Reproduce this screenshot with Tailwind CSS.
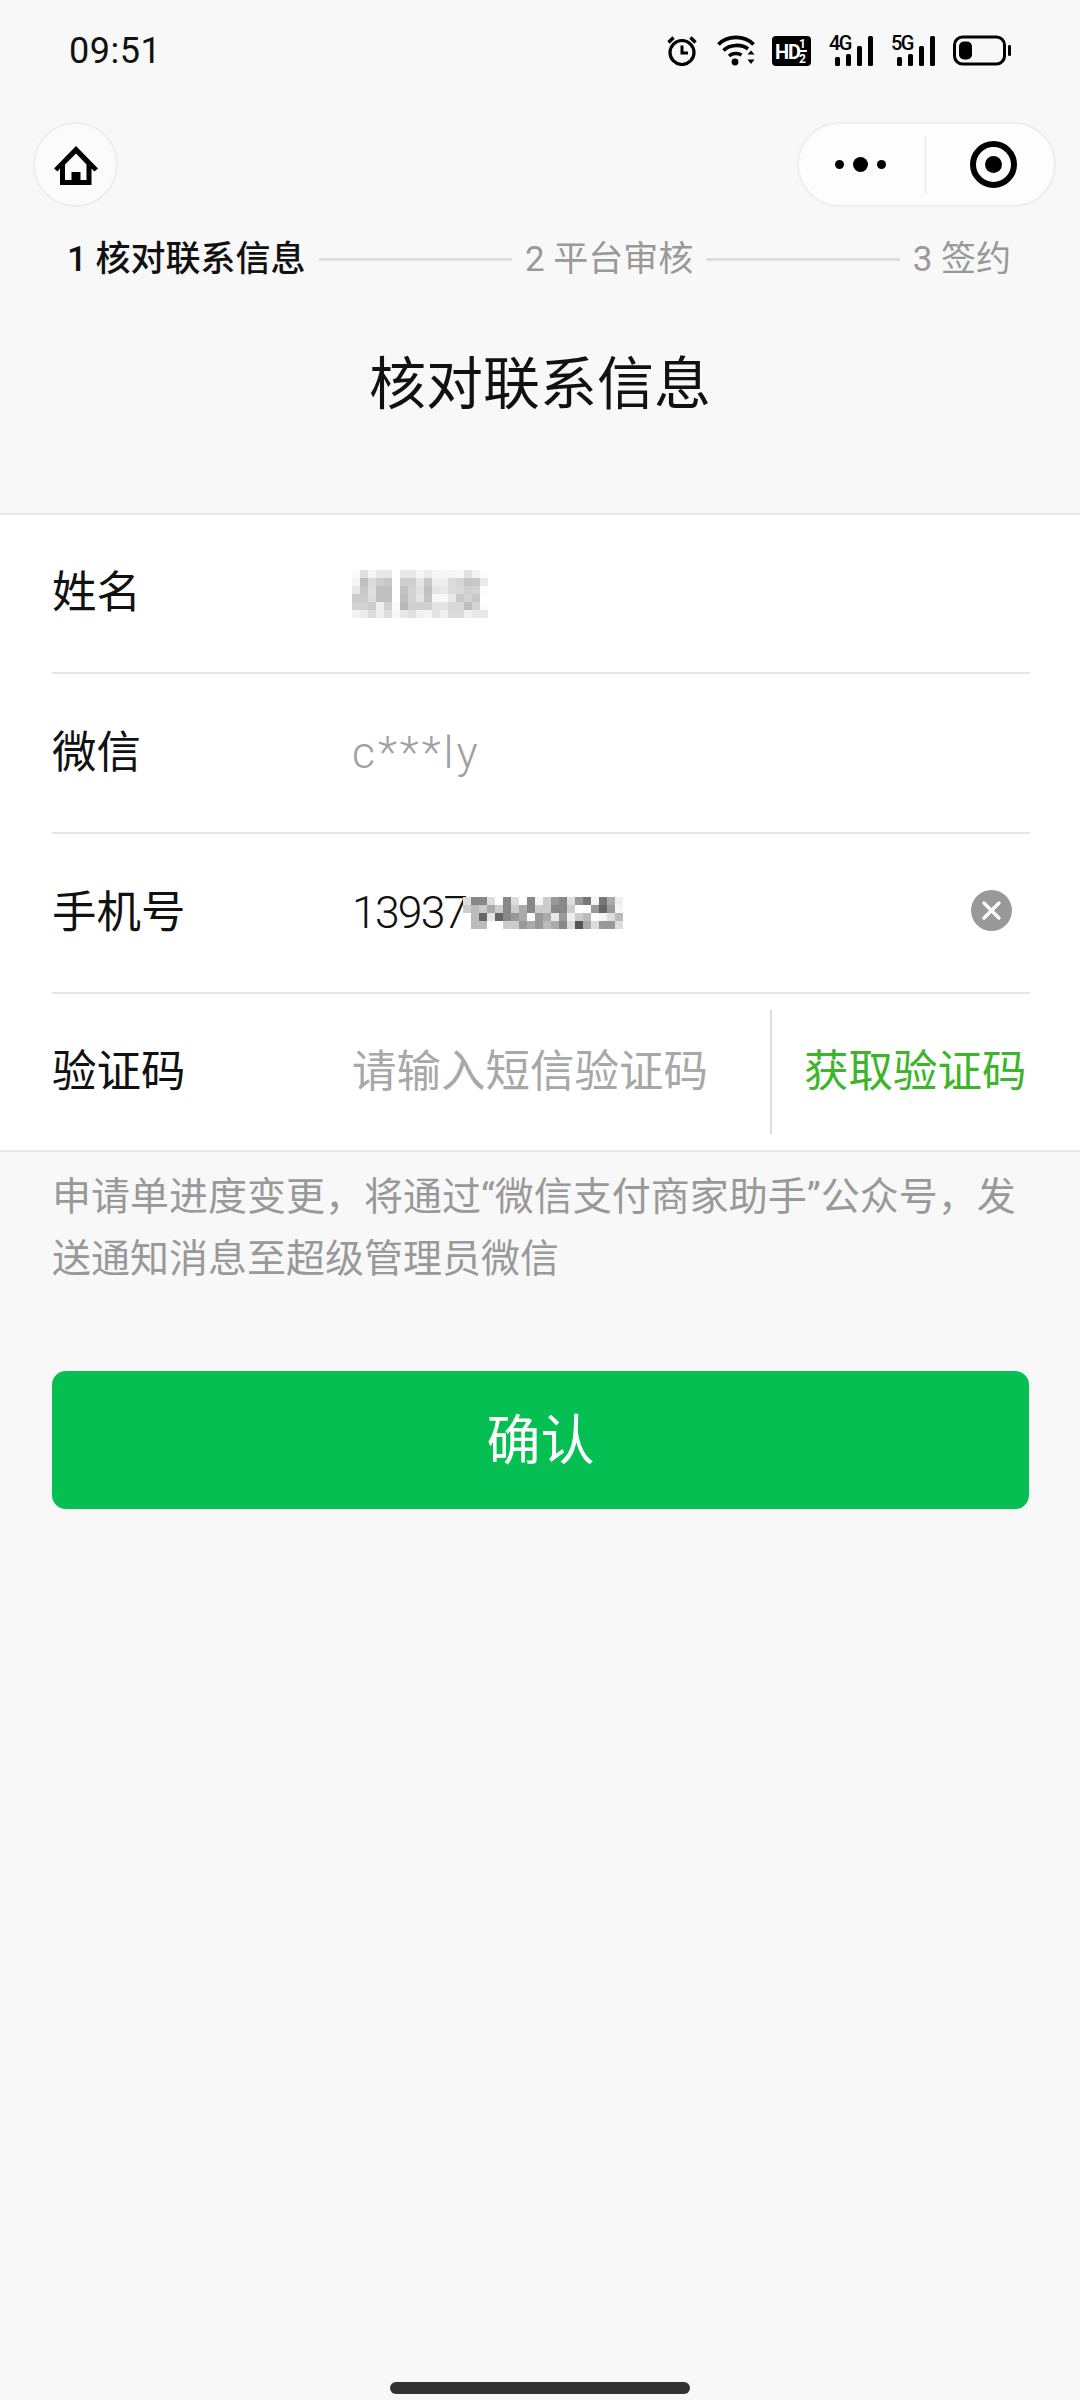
<!DOCTYPE html>
<html lang="zh-CN">
<head>
<meta charset="utf-8">
<script src="https://cdn.jsdelivr.net/npm/@tailwindcss/browser@4"></script>
</head>
<body>
<div class="relative w-[1080px] h-[2400px] bg-[#f8f8f8] overflow-hidden flex flex-col font-['Roboto','Noto_Sans_CJK_SC',sans-serif] text-[#111]">

  <!-- status bar -->
  <div class="h-[100px] flex items-center pl-[69px] pr-[69px] pt-[1px] shrink-0">
    <span class="text-[36px] leading-none tracking-[0.5px] font-normal">09:51</span>
    <div class="ml-auto flex items-center">
      <svg class="w-[30px] h-[31px]" viewBox="0 0 30 31" fill="none" stroke="#000">
        <circle cx="15" cy="17.5" r="12" stroke-width="3.2"/>
        <path d="M15 10.5V18H21" stroke-width="3"/>
        <path d="M1.5 7.5L6.5 2.5M28.5 7.5L23.5 2.5" stroke-width="3.4"/>
      </svg>
      <svg class="ml-[20px] w-[39px] h-[31px]" viewBox="0 0 39 31" fill="none" stroke="#000">
        <path d="M1.5 9.5C10 0 28 0 36.5 9.5" stroke-width="3.6"/>
        <path d="M6.5 15.5C12.5 9 25 9 31 14" stroke-width="3.6"/>
        <path d="M12 21C15.5 17.8 21 17.8 24.5 20" stroke-width="3.6"/>
        <circle cx="18" cy="27" r="3.4" fill="#000" stroke="none"/>
        <path d="M30.5 19.5L34 15.5L37.5 19.5ZM30.5 24.5H37.5L34 29Z" fill="#000" stroke="none"/>
      </svg>
      <div class="relative ml-[16px] w-[39px] h-[30px] rounded-[4px] bg-black text-white font-bold leading-none">
        <span class="absolute left-[3px] top-[6px] text-[20px] tracking-[-1.2px]">HD</span>
        <span class="absolute left-[27px] top-[2px] text-[12px]">1</span>
        <span class="absolute left-[26px] top-[14px] w-[9px] h-[2px] bg-white"></span>
        <span class="absolute left-[27px] top-[17px] text-[12px]">2</span>
      </div>
      <div class="relative ml-[18px] w-[44px] h-[31px]">
        <span class="absolute left-0 top-0 text-[20px] leading-[16px] font-medium tracking-[-1.5px] text-black">4G</span>
        <svg class="w-[44px] h-[31px]" viewBox="0 0 44 31">
          <rect x="6" y="22" width="5" height="9" rx="1.5" fill="#000"/>
          <rect x="17" y="19" width="5" height="12" rx="1.5" fill="#000"/>
          <rect x="28" y="11" width="5" height="20" rx="1.5" fill="#000"/>
          <rect x="39" y="1" width="5" height="30" rx="1.5" fill="#000"/>
        </svg>
      </div>
      <div class="relative ml-[18px] w-[44px] h-[31px]">
        <span class="absolute left-0 top-0 text-[20px] leading-[16px] font-medium tracking-[-1.5px] text-black">5G</span>
        <svg class="w-[44px] h-[31px]" viewBox="0 0 44 31">
          <rect x="6" y="22" width="5" height="9" rx="1.5" fill="#000"/>
          <rect x="17" y="19" width="5" height="12" rx="1.5" fill="#000"/>
          <rect x="28" y="11" width="5" height="20" rx="1.5" fill="#000"/>
          <rect x="39" y="1" width="5" height="30" rx="1.5" fill="#000"/>
        </svg>
      </div>
      <svg class="ml-[18px] w-[58px] h-[31px]" viewBox="0 0 58 31">
        <rect x="1.5" y="2" width="50" height="27" rx="8" fill="none" stroke="#000" stroke-width="3"/>
        <rect x="6" y="6.5" width="13" height="18" rx="5" fill="#000"/>
        <rect x="55" y="10" width="3" height="11" rx="1.2" fill="#000"/>
      </svg>
    </div>
  </div>

  <!-- navigation capsule row -->
  <div class="mt-[22px] h-[85px] pl-[33px] pr-[24px] flex items-center justify-between shrink-0">
    <div class="w-[85px] h-[85px] rounded-full border-2 border-[#eeeeee] bg-[#fbfbfb] flex items-center justify-center">
      <svg class="w-[44px] h-[39px] translate-y-[1px]" viewBox="0 0 44 39">
        <path fill="#000" fill-rule="evenodd" d="M22 0L44 22.5L40.5 25.5L37.5 22.5V39H6V22.5L3.5 25.5L0 22.5ZM22 7.5L11 18.5V34H17.5V26H26.5V34H32.5V18.5Z"/>
      </svg>
    </div>
    <div class="w-[259px] h-[85px] rounded-full border-2 border-[#eeeeee] bg-[#fdfdfd] flex items-center">
      <div class="w-[126px] flex items-center justify-center gap-[9px] pr-[4px]">
        <span class="w-[9px] h-[9px] rounded-full bg-black"></span>
        <span class="w-[15px] h-[15px] rounded-full bg-black"></span>
        <span class="w-[9px] h-[9px] rounded-full bg-black"></span>
      </div>
      <div class="w-[1px] h-[58px] bg-[#e5e5e5]"></div>
      <div class="flex-1 flex items-center justify-center pl-[7px]">
        <div class="w-[47px] h-[47px] rounded-full border-[6px] border-black flex items-center justify-center">
          <span class="w-[17px] h-[17px] rounded-full bg-black"></span>
        </div>
      </div>
    </div>
  </div>

  <!-- steps -->
  <div class="mt-[30px] h-[44px] pl-[67px] pr-[69px] flex items-center gap-[13px] shrink-0 text-[35px] leading-none text-[#999999]">
    <span class="text-[#111] font-medium whitespace-nowrap">1 核对联系信息</span>
    <div class="flex-1 h-[3px] bg-[#dddddd]"></div>
    <span class="whitespace-nowrap">2 平台审核</span>
    <div class="flex-1 h-[3px] bg-[#dddddd]"></div>
    <span class="whitespace-nowrap">3 签约</span>
  </div>

  <!-- title -->
  <div class="mt-[63px] h-[80px] flex items-center justify-center shrink-0">
    <h1 class="text-[57px] leading-none font-normal text-[#111]">核对联系信息</h1>
  </div>

  <!-- form -->
  <div class="mt-[89px] bg-white border-y-2 border-[#e8e8e8] shrink-0">
    <div class="ml-[52px] mr-[50px] h-[159px] border-b-2 border-[#e5e5e5] flex items-center text-[44.5px] leading-none">
      <span class="w-[300px]">姓名</span>
      <div class="grid grid-cols-[repeat(17,8px)] grid-rows-[repeat(6,8px)]">
        <i class="bg-[#fbfbfb]"></i><i class="bg-[#e0e0e0]"></i><i class="bg-[#f5f5f5]"></i><i class="bg-[#e8e8e8]"></i><i class="bg-[#e8e8e8]"></i><i class="bg-[#ffffff]"></i><i class="bg-[#e8e8e8]"></i><i class="bg-[#e8e8e8]"></i><i class="bg-[#f5f5f5]"></i><i class="bg-[#ececec]"></i><i class="bg-[#f5f5f5]"></i><i class="bg-[#f7f7f7]"></i><i class="bg-[#f5f5f5]"></i><i class="bg-[#f9f9f9]"></i><i class="bg-[#e2e2e2]"></i><i class="bg-[#f3f3f3]"></i><i class="bg-[#fcfcfc]"></i>
        <i class="bg-[#f5f5f5]"></i><i class="bg-[#c0c0c0]"></i><i class="bg-[#dcdcdc]"></i><i class="bg-[#cdcdcd]"></i><i class="bg-[#c8c8c8]"></i><i class="bg-[#ffffff]"></i><i class="bg-[#cfcfcf]"></i><i class="bg-[#cfcfcf]"></i><i class="bg-[#e5e5e5]"></i><i class="bg-[#c8c8c8]"></i><i class="bg-[#eeeeee]"></i><i class="bg-[#eeeeee]"></i><i class="bg-[#dcdcdc]"></i><i class="bg-[#d5d5d5]"></i><i class="bg-[#c5c5c5]"></i><i class="bg-[#c8c8c8]"></i><i class="bg-[#eaeaea]"></i>
        <i class="bg-[#e8e8e8]"></i><i class="bg-[#c8c8c8]"></i><i class="bg-[#dedede]"></i><i class="bg-[#bfbfbf]"></i><i class="bg-[#c0c0c0]"></i><i class="bg-[#ffffff]"></i><i class="bg-[#c3c3c3]"></i><i class="bg-[#d3d3d3]"></i><i class="bg-[#e0e0e0]"></i><i class="bg-[#c0c0c0]"></i><i class="bg-[#e5e5e5]"></i><i class="bg-[#e8e8e8]"></i><i class="bg-[#dcdcdc]"></i><i class="bg-[#d8d8d8]"></i><i class="bg-[#d0d0d0]"></i><i class="bg-[#d3d3d3]"></i><i class="bg-[#fcfcfc]"></i>
        <i class="bg-[#cccccc]"></i><i class="bg-[#cccccc]"></i><i class="bg-[#dcdcdc]"></i><i class="bg-[#bfbfbf]"></i><i class="bg-[#c0c0c0]"></i><i class="bg-[#ffffff]"></i><i class="bg-[#c0c0c0]"></i><i class="bg-[#d3d3d3]"></i><i class="bg-[#e5e5e5]"></i><i class="bg-[#c3c3c3]"></i><i class="bg-[#f7f7f7]"></i><i class="bg-[#f7f7f7]"></i><i class="bg-[#e8e8e8]"></i><i class="bg-[#c8c8c8]"></i><i class="bg-[#d3d3d3]"></i><i class="bg-[#c8c8c8]"></i><i class="bg-[#ffffff]"></i>
        <i class="bg-[#d3d3d3]"></i><i class="bg-[#d3d3d3]"></i><i class="bg-[#cccccc]"></i><i class="bg-[#f0f0f0]"></i><i class="bg-[#d0d0d0]"></i><i class="bg-[#fafafa]"></i><i class="bg-[#b8b8b8]"></i><i class="bg-[#d0d0d0]"></i><i class="bg-[#d0d0d0]"></i><i class="bg-[#d0d0d0]"></i><i class="bg-[#e3e3e3]"></i><i class="bg-[#e3e3e3]"></i><i class="bg-[#d8d8d8]"></i><i class="bg-[#d8d8d8]"></i><i class="bg-[#bdbdbd]"></i><i class="bg-[#d5d5d5]"></i><i class="bg-[#fcfcfc]"></i>
        <i class="bg-[#f2f2f2]"></i><i class="bg-[#ececec]"></i><i class="bg-[#dcdcdc]"></i><i class="bg-[#eeeeee]"></i><i class="bg-[#dedede]"></i><i class="bg-[#f7f7f7]"></i><i class="bg-[#e8e8e8]"></i><i class="bg-[#e0e0e0]"></i><i class="bg-[#f0f0f0]"></i><i class="bg-[#f5f5f5]"></i><i class="bg-[#e3e3e3]"></i><i class="bg-[#f0f0f0]"></i><i class="bg-[#dcdcdc]"></i><i class="bg-[#dcdcdc]"></i><i class="bg-[#efefef]"></i><i class="bg-[#e8e8e8]"></i><i class="bg-[#e8e8e8]"></i>
      </div>
    </div>
    <div class="ml-[52px] mr-[50px] h-[160px] border-b-2 border-[#e5e5e5] flex items-center text-[44.5px] leading-none">
      <span class="w-[300px]">微信</span>
      <span class="text-[#a0a0a0] font-light tracking-[3px]">c***ly</span>
    </div>
    <div class="ml-[52px] mr-[50px] h-[160px] border-b-2 border-[#e5e5e5] flex items-center text-[44.5px] leading-none">
      <span class="w-[300px]">手机号</span>
      <span class="font-light tracking-[-1.8px]">13937</span>
      <div class="-ml-[3px] grid grid-cols-[repeat(20,8px)] grid-rows-[repeat(4,8px)]">
        <i class="bg-[#dddddd]"></i><i class="bg-[#888888]"></i><i class="bg-[#888888]"></i><i class="bg-[#dddddd]"></i><i class="bg-[#ffffff]"></i><i class="bg-[#888888]"></i><i class="bg-[#dddddd]"></i><i class="bg-[#ffffff]"></i><i class="bg-[#888888]"></i><i class="bg-[#f5f5f5]"></i><i class="bg-[#cccccc]"></i><i class="bg-[#999999]"></i><i class="bg-[#888888]"></i><i class="bg-[#dddddd]"></i><i class="bg-[#999999]"></i><i class="bg-[#777777]"></i><i class="bg-[#f5f5f5]"></i><i class="bg-[#777777]"></i><i class="bg-[#aaaaaa]"></i><i class="bg-[#eeeeee]"></i>
        <i class="bg-[#cccccc]"></i><i class="bg-[#bbbbbb]"></i><i class="bg-[#cccccc]"></i><i class="bg-[#aaaaaa]"></i><i class="bg-[#cccccc]"></i><i class="bg-[#888888]"></i><i class="bg-[#cccccc]"></i><i class="bg-[#aaaaaa]"></i><i class="bg-[#888888]"></i><i class="bg-[#cccccc]"></i><i class="bg-[#cccccc]"></i><i class="bg-[#888888]"></i><i class="bg-[#888888]"></i><i class="bg-[#cccccc]"></i><i class="bg-[#ffffff]"></i><i class="bg-[#ffffff]"></i><i class="bg-[#999999]"></i><i class="bg-[#666666]"></i><i class="bg-[#999999]"></i><i class="bg-[#f5f5f5]"></i>
        <i class="bg-[#ffffff]"></i><i class="bg-[#bbbbbb]"></i><i class="bg-[#666666]"></i><i class="bg-[#e5e5e5]"></i><i class="bg-[#666666]"></i><i class="bg-[#888888]"></i><i class="bg-[#999999]"></i><i class="bg-[#aaaaaa]"></i><i class="bg-[#ffffff]"></i><i class="bg-[#999999]"></i><i class="bg-[#aaaaaa]"></i><i class="bg-[#e8e8e8]"></i><i class="bg-[#999999]"></i><i class="bg-[#eeeeee]"></i><i class="bg-[#cccccc]"></i><i class="bg-[#bbbbbb]"></i><i class="bg-[#ffffff]"></i><i class="bg-[#f5f5f5]"></i><i class="bg-[#dddddd]"></i><i class="bg-[#bbbbbb]"></i>
        <i class="bg-[#ffffff]"></i><i class="bg-[#bbbbbb]"></i><i class="bg-[#bbbbbb]"></i><i class="bg-[#ffffff]"></i><i class="bg-[#ffffff]"></i><i class="bg-[#cccccc]"></i><i class="bg-[#cccccc]"></i><i class="bg-[#999999]"></i><i class="bg-[#aaaaaa]"></i><i class="bg-[#999999]"></i><i class="bg-[#bbbbbb]"></i><i class="bg-[#aaaaaa]"></i><i class="bg-[#888888]"></i><i class="bg-[#dddddd]"></i><i class="bg-[#555555]"></i><i class="bg-[#aaaaaa]"></i><i class="bg-[#dddddd]"></i><i class="bg-[#999999]"></i><i class="bg-[#999999]"></i><i class="bg-[#dddddd]"></i>
      </div>
      <svg class="ml-auto mr-[18px] -translate-y-[3px] w-[41px] h-[41px]" viewBox="0 0 41 41">
        <circle cx="20.5" cy="20.5" r="20.5" fill="#999999"/>
        <path d="M13 13L28 28M28 13L13 28" stroke="#fff" stroke-width="3.4" stroke-linecap="round"/>
      </svg>
    </div>
    <div class="ml-[52px] mr-[50px] h-[156px] flex items-center text-[44.5px] leading-none">
      <span class="w-[300px]">验证码</span>
      <span class="text-[#a8a8a8] whitespace-nowrap">请输入短信验证码</span>
      <div class="ml-[62px] w-[2px] h-[124px] bg-[#dddddd]"></div>
      <span class="ml-[32px] text-[#3db52a] whitespace-nowrap">获取验证码</span>
    </div>
  </div>

  <!-- hint -->
  <p class="mt-[14px] mx-[52px] text-[39px] leading-[62px] text-[#999999]">申请单进度变更，将通过“微信支付商家助手”公众号，发送通知消息至超级管理员微信</p>

  <!-- confirm -->
  <div class="mt-[81px] mx-[52px] w-[977px] h-[138px] pt-[4px] rounded-[14px] bg-[#05bf52] flex items-center justify-center text-white text-[54px] leading-none">确认</div>

  <!-- home indicator -->
  <div class="absolute left-[390px] top-[2382px] w-[300px] h-[12px] rounded-full bg-[#333333]"></div>
</div>
</body>
</html>
